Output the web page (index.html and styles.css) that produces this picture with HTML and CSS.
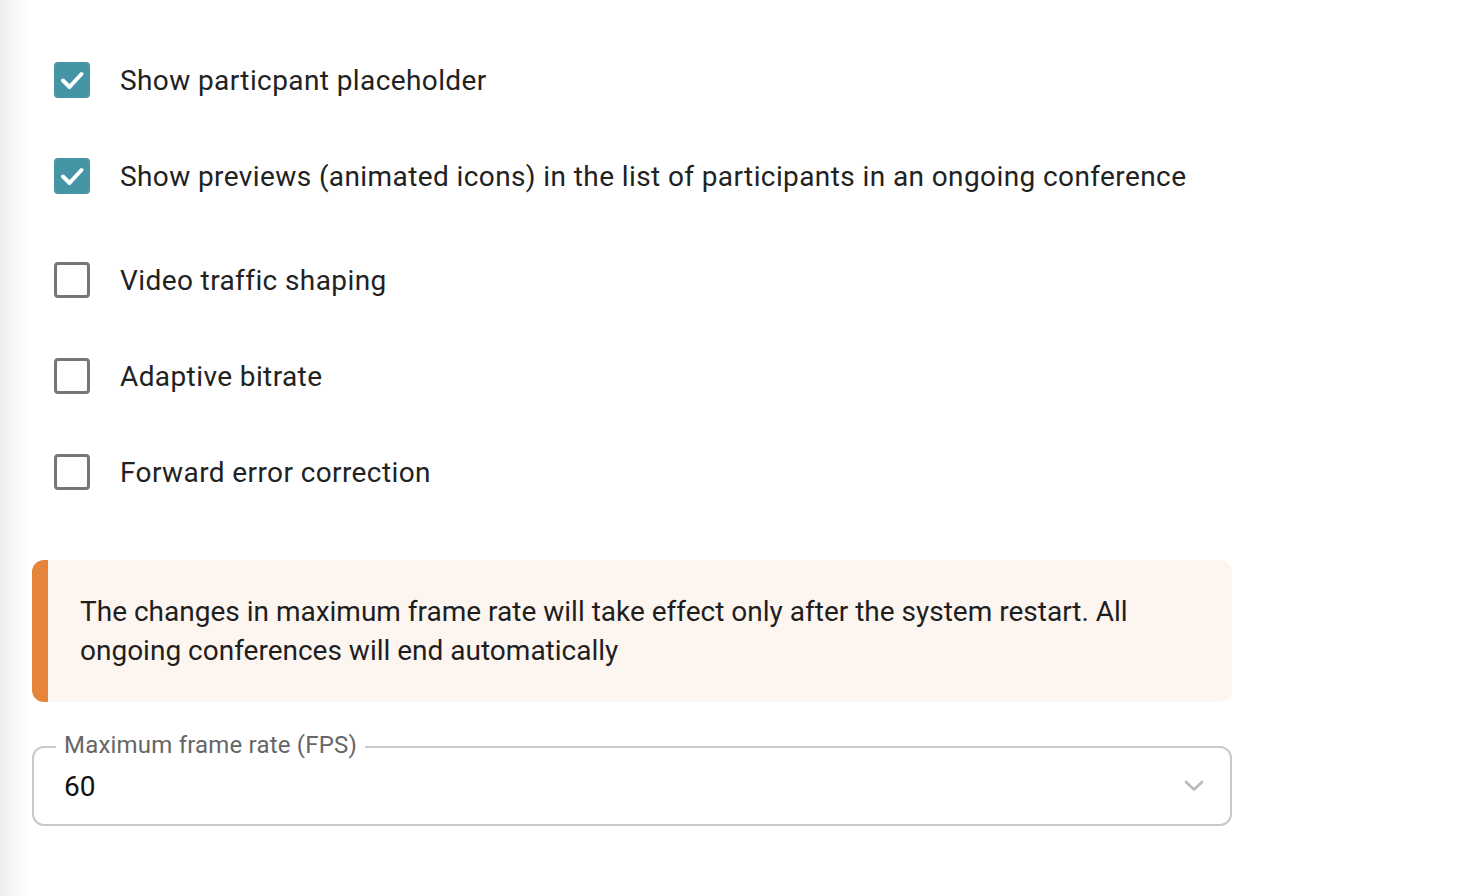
FILE: index.html
```html
<!DOCTYPE html>
<html lang="en">
<head>
<meta charset="utf-8">
<title>Settings</title>
<link rel="stylesheet" href="styles.css">
</head>
<body>
<main class="page">
  <div class="options">
    <label class="option">
      <span class="box checked"><svg viewBox="0 0 36 36" width="36" height="36"><path d="M9 18.5 L15.5 25 L27.5 12" fill="none" stroke="#fff" stroke-width="4" stroke-linecap="round" stroke-linejoin="round"/></svg></span>
      <span class="text">Show particpant placeholder</span>
    </label>
    <label class="option gap-a">
      <span class="box checked"><svg viewBox="0 0 36 36" width="36" height="36"><path d="M9 18.5 L15.5 25 L27.5 12" fill="none" stroke="#fff" stroke-width="4" stroke-linecap="round" stroke-linejoin="round"/></svg></span>
      <span class="text">Show previews (animated icons) in the list of participants in an ongoing conference</span>
    </label>
    <label class="option gap-b">
      <span class="box"></span>
      <span class="text">Video traffic shaping</span>
    </label>
    <label class="option gap-a">
      <span class="box"></span>
      <span class="text">Adaptive bitrate</span>
    </label>
    <label class="option gap-a">
      <span class="box"></span>
      <span class="text">Forward error correction</span>
    </label>
  </div>

  <div class="alert">
    <p>The changes in maximum frame rate will take effect only after the system restart. All ongoing conferences will end automatically</p>
  </div>

  <div class="select">
    <span class="select-label">Maximum frame rate (FPS)</span>
    <span class="select-value">60</span>
    <svg class="chevron" viewBox="0 0 20 12" width="20" height="12"><path d="M2 2 L10 9.5 L18 2" fill="none" stroke="#b9b9b9" stroke-width="2.6" stroke-linecap="round" stroke-linejoin="round"/></svg>
  </div>
</main>
</body>
</html>
```
FILE: styles.css
```css
* { box-sizing: border-box; }
html, body { margin: 0; padding: 0; }
body {
  width: 1466px;
  height: 896px;
  overflow: hidden;
  background: linear-gradient(to right, #eeeeee 0px, #f8f8f8 14px, #ffffff 32px);
  font-family: Roboto, "Liberation Sans", Arial, sans-serif;
  color: #212121;
}
.page {
  padding-left: 32px;
  width: 1232px;
}
.options {
  padding-top: 62px;
  padding-left: 22px;
  display: flex;
  flex-direction: column;
}
.option {
  display: flex;
  align-items: center;
  height: 36px;
}
.gap-a { margin-top: 60px; }
.gap-b { margin-top: 68px; }
.box {
  width: 36px;
  height: 36px;
  border: 3px solid #767676;
  border-radius: 4px;
  flex: none;
  display: flex;
}
.box.checked {
  background: #4496a6;
  border: none;
}
.text {
  margin-left: 30px;
  font-size: 28px;
  line-height: 36px;
  padding-top: 1px;
  letter-spacing: 0.4px;
  color: #222;
  white-space: nowrap;
}
.alert {
  margin-top: 70px;
  width: 1200px;
  height: 142px;
  background: #fdf5f0;
  border-left: 16px solid #e5843a;
  border-radius: 12px;
  padding: 32px 32px 0 32px;
}
.alert p {
  margin: 0;
  font-size: 28px;
  line-height: 39px;
  color: #1e1e1e;
  letter-spacing: 0;
}
.select {
  position: relative;
  margin-top: 44px;
  width: 1200px;
  height: 80px;
  border: 2px solid #c9c9c9;
  border-radius: 12px;
  display: flex;
  align-items: center;
  padding-left: 30px;
  padding-right: 26px;
}
.select-label {
  position: absolute;
  left: 22px;
  top: -18px;
  padding: 0 8px;
  background: #fff;
  font-size: 24px;
  line-height: 30px;
  color: #666;
  letter-spacing: 0.2px;
}
.select-value {
  font-size: 28px;
  color: #111;
  flex: 1;
}
.chevron { flex: none; }
```
